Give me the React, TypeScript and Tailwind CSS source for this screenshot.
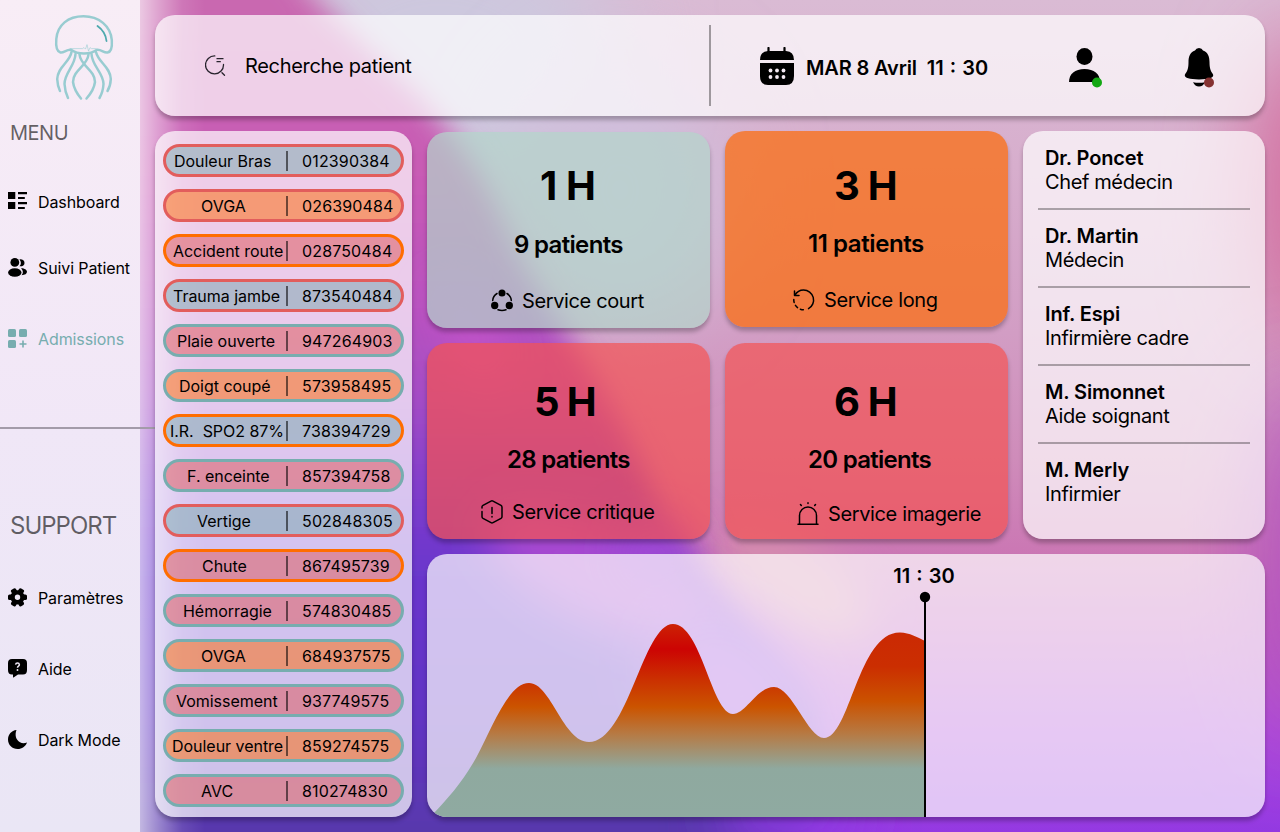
import type { ReactNode } from "react";

const SHADOW = "shadow-[0_4px_4px_rgba(0,0,0,0.25)]";

function Wallpaper() {
  return (
    <svg className="absolute inset-0 -z-10 h-full w-full" viewBox="0 0 1280 832" preserveAspectRatio="none" aria-hidden="true">
      <defs>
        <linearGradient id="base" x1="0" y1="0" x2="0" y2="1">
          <stop offset="0" stopColor="#dabbd4" />
          <stop offset="0.2" stopColor="#d7aecd" />
          <stop offset="0.4" stopColor="#d29dc4" />
          <stop offset="0.55" stopColor="#cf8cba" />
          <stop offset="0.66" stopColor="#cb78b4" />
          <stop offset="0.76" stopColor="#c060c0" />
          <stop offset="0.88" stopColor="#ac48da" />
          <stop offset="1" stopColor="#9439e2" />
        </linearGradient>
        <linearGradient id="wave" x1="0" y1="0" x2="0" y2="832" gradientUnits="userSpaceOnUse">
          <stop offset="0" stopColor="#c968b0" />
          <stop offset="0.22" stopColor="#c85ab5" />
          <stop offset="0.36" stopColor="#b852bd" />
          <stop offset="0.48" stopColor="#a44cc5" />
          <stop offset="0.6" stopColor="#7c3bcc" />
          <stop offset="0.7" stopColor="#6836cc" />
          <stop offset="0.86" stopColor="#6234c4" />
          <stop offset="1" stopColor="#5838ac" />
        </linearGradient>
        <linearGradient id="glow" x1="140" y1="0" x2="205" y2="0" gradientUnits="userSpaceOnUse">
          <stop offset="0" stopColor="#fff" stopOpacity="0.64" />
          <stop offset="0.3" stopColor="#fff" stopOpacity="0.38" />
          <stop offset="0.65" stopColor="#fff" stopOpacity="0.1" />
          <stop offset="1" stopColor="#fff" stopOpacity="0" />
        </linearGradient>
        <filter id="b14" x="-30%" y="-30%" width="160%" height="160%"><feGaussianBlur stdDeviation="14" /></filter>
        <filter id="b45" x="-80%" y="-80%" width="260%" height="260%"><feGaussianBlur stdDeviation="45" /></filter>
        <filter id="b22" x="-80%" y="-80%" width="260%" height="260%"><feGaussianBlur stdDeviation="22" /></filter>
        <filter id="b30" x="-80%" y="-80%" width="260%" height="260%"><feGaussianBlur stdDeviation="28" /></filter>
      </defs>
      <rect width="1280" height="832" fill="url(#base)" />
      <ellipse cx="440" cy="60" rx="180" ry="150" fill="#cdc8de" filter="url(#b45)" />
      <ellipse cx="620" cy="190" rx="110" ry="130" fill="#d0bfdc" filter="url(#b45)" />
      <ellipse cx="1310" cy="190" rx="60" ry="160" fill="#d36a9c" filter="url(#b45)" />
      <ellipse cx="1310" cy="560" rx="50" ry="180" fill="#b050c0" filter="url(#b45)" />
      <ellipse cx="790" cy="580" rx="90" ry="40" transform="rotate(30 790 580)" fill="#d58cae" filter="url(#b22)" />
      <path
        d="M-100 -100H250C280 -20 360 40 418 95C455 135 480 170 502 220C525 280 560 320 590 370C620 420 650 480 668 530C700 590 750 630 790 680C830 720 820 780 770 932H-100Z"
        fill="url(#wave)"
        filter="url(#b14)"
      />
      <ellipse cx="605" cy="575" rx="130" ry="50" transform="rotate(24 605 575)" fill="#a748d0" filter="url(#b22)" />
      <ellipse cx="655" cy="555" rx="36" ry="36" fill="#a04ad4" filter="url(#b22)" />
      <ellipse cx="735" cy="690" rx="90" ry="60" transform="rotate(42 735 690)" fill="#a048dc" filter="url(#b30)" />
      <ellipse cx="790" cy="815" rx="70" ry="40" fill="#8c39e0" filter="url(#b30)" />
      <ellipse cx="470" cy="330" rx="25" ry="60" transform="rotate(-30 470 330)" fill="#c152c8" filter="url(#b22)" />
      <rect x="140" width="65" height="832" fill="url(#glow)" />
    </svg>
  );
}

function Jellyfish() {
  return (
    <svg className="ml-[52px] block" width="64" height="90" viewBox="52 12 64 90" fill="none" stroke="#98ccd1" strokeWidth="2.500" strokeLinecap="round" strokeLinejoin="round">
      <path d="M71 49.800C66 49.500 64 53 60.500 52.500C56.500 51.500 55.800 45 56.300 39C57.500 25 68 16.300 83.500 16.300C99 16.300 110.500 26 111.800 40C112.200 46 111.300 52 107.500 52.500C103.500 53 102 49.500 97 49.800C90 54.800 78 54.800 71 49.800Z" />
      <path d="M70 48.600H82.500l1.500-1 1.500 1.500 1.500-4.500 1.500 6.500 1.500-3.500 1.500 1H96" strokeWidth="0.600" />
      <path d="M97.500 26C102.500 29.500 105.800 34 106.500 41" stroke="#4fa9ae" strokeWidth="1.800" />
      <path d="M71.500 52C70 62 57.500 67 57.200 79Q57.500 86 60 91" />
      <path d="M75.500 54C75 66 64.500 73 64.500 84Q65 92 68 98" />
      <path d="M79.500 54.500C80.500 66 95 70 95 82Q94 90 86.500 98.500" />
      <path d="M88.500 54.500C87.500 66 73 70 73 82Q74 90 81 98.500" />
      <path d="M91.500 54C92 66 103.500 73 103.500 84Q103 92 99.500 98" />
      <path d="M96 52C98 62 110.500 67 110.800 79Q110.500 86 107.500 91" />
    </svg>
  );
}

const navIcons: Record<string, ReactNode> = {
  dashboard: <path d="M0 0H7.300V7H0ZM0 10H7.300V17H0ZM10 0H19V2.200H10ZM10 5H16.800V7H10ZM10 10H19V12.200H10ZM10 15H16.800V17H10Z" />,
  users: (
    <>
      <circle cx="6.800" cy="4.400" r="4.400" />
      <ellipse cx="6.800" cy="14.500" rx="6.700" ry="4.300" />
      <path d="M11.500 1.400C14.500 1.100 16.500 2.600 16.500 4.900S14.500 8.600 11.500 8.300Q14.300 4.900 11.500 1.400ZM13 10.200C16.500 10.100 19 11.900 19 13.800S17 17.100 13.600 17.200Q16.500 14 13 10.200Z" />
    </>
  ),
  grid: (
    <>
      <rect width="8" height="8" rx="1.500" />
      <rect x="11" width="8" height="8" rx="1.500" />
      <rect y="11" width="8" height="8" rx="1.500" />
      <path d="M14.200 11.500h1.600v2.700h2.700v1.600h-2.700v2.700h-1.600v-2.700h-2.700v-1.600h2.700Z" />
    </>
  ),
  gear: (
    <>
      <circle cx="9.500" cy="9.300" r="4.900" fill="none" stroke="currentColor" strokeWidth="4.400" />
      {[0, 60, 120].map((turn) => (
        <g key={turn} transform={`rotate(${turn} 9.500 9.300)`}>
          <rect y="6.500" width="5" height="5.600" rx="1.600" />
          <rect x="14" y="6.500" width="5" height="5.600" rx="1.600" />
        </g>
      ))}
    </>
  ),
  help: (
    <>
      <path d="M4 0H15Q19 0 19 4V11Q19 15.500 15 15.500H10L5.500 18.500Q5 18.600 5 18V15.500H4Q0 15.500 0 11V4Q0 0 4 0Z" />
      <path d="M7.600 5.600Q7.800 4 9.500 4T11.400 5.800C11.400 7.200 9.500 7.200 9.500 8.800" fill="none" stroke="#efe8f6" strokeWidth="1.500" />
      <circle cx="9.500" cy="11" r="0.950" fill="#efe8f6" />
    </>
  ),
  moon: <path d="M8.500 0C3.500 0.500 0 4.500 0 9.500C0 15 4.300 19 9.600 19C14 19 17.500 16.500 19 12.500Q15 14 12 12.200C8 10 6.500 5 8.500 0Z" />,
};

function NavItem({ icon, label, active = false }: { icon: string; label: string; active?: boolean }) {
  return (
    <a className={`flex h-6 items-center gap-[11px] pl-2 ${active ? "text-[#77adaf]" : "text-black"}`}>
      <svg width="19" height="19" viewBox="0 0 19 19" fill="currentColor" className="mb-px shrink-0">
        {navIcons[icon]}
      </svg>
      <span className="text-[16px] leading-6 tracking-[-0.1px] whitespace-nowrap">{label}</span>
    </a>
  );
}

function Sidebar() {
  return (
    <aside className="flex w-[155px] shrink-0 flex-col">
      <div className="flex h-[427px] w-[140px] flex-col bg-gradient-to-b from-[#f8edf6] to-[#f1e7f7] pt-3">
        <Jellyfish />
        <h2 className="mt-[19px] pl-2.5 text-[20px] leading-6 tracking-[-0.5px] text-black/60">MENU</h2>
        <nav className="mt-[45px] flex flex-col">
          <NavItem icon="dashboard" label="Dashboard" />
          <div className="mt-[42px]"><NavItem icon="users" label="Suivi Patient" /></div>
          <div className="mt-[47px]"><NavItem icon="grid" label="Admissions" active /></div>
        </nav>
      </div>
      <hr className="h-[2px] w-[155px] border-0 bg-[#a39ba9]" />
      <div className="flex w-[140px] grow flex-col bg-gradient-to-b from-[#f0e7f7] to-[#eae6f5] pt-[82px]">
        <h2 className="pl-2.5 text-[24px] leading-[29px] tracking-[-1px] text-black/60">SUPPORT</h2>
        <nav className="mt-[46px] flex flex-col gap-[47px]">
          <NavItem icon="gear" label="Paramètres" />
          <NavItem icon="help" label="Aide" />
          <NavItem icon="moon" label="Dark Mode" />
        </nav>
      </div>
    </aside>
  );
}

function Header() {
  return (
    <header className={`flex h-[101px] shrink-0 items-center rounded-[20px] bg-white/70 ${SHADOW}`}>
      <div className="flex w-[554px] items-center gap-[19px] pl-[50px]">
        <svg width="21" height="21" viewBox="0 0 21 21" fill="none" stroke="#27232c" strokeWidth="1.300" strokeLinecap="round">
          <path d="M9.800 0.900A9 9 0 1 0 18.500 9.500M12 3.700H18M12 6.700H15.300M17 17.700L19.500 20.200" />
        </svg>
        <span className="text-[20px] leading-6 tracking-[-0.32px]">Recherche patient</span>
      </div>
      <div className="h-[81px] w-[2px] bg-black/35" />
      <div className="ml-[49px] flex items-center gap-3">
        <svg width="34" height="38" viewBox="0 0 34 38">
          <path d="M8.500 5V1M24.500 5V1" stroke="#000" strokeWidth="2.200" strokeLinecap="round" />
          <path d="M8 4H26Q34 4.500 34 13H0Q0 4.500 8 4Z" />
          <path d="M0 16H34V29Q34 38 26 38H8Q0 38 0 29Z" />
          <g fill="#f5eaf3">
            <circle cx="10.500" cy="23.500" r="1.900" /><circle cx="17" cy="23.500" r="1.900" /><circle cx="23.500" cy="23.500" r="1.900" />
            <circle cx="10.500" cy="30" r="1.900" /><circle cx="17" cy="30" r="1.900" /><circle cx="23.500" cy="30" r="1.900" />
          </g>
        </svg>
        <div className="mt-1 flex gap-[10px] text-[20px] leading-6 font-semibold tracking-[-0.15px]">
          <span>MAR 8 Avril</span>
          <span className="tracking-normal [word-spacing:1px]">11 : 30</span>
        </div>
      </div>
      <svg className="mt-1 ml-auto" width="34" height="40" viewBox="0 0 34 40">
        <ellipse cx="15.500" cy="8.500" rx="8" ry="8.500" />
        <path d="M0 34C0 26 6 21 15.500 21S31 26 31 34Z" />
        <circle cx="28" cy="34.500" r="5" fill="#13a813" />
      </svg>
      <svg className="mt-1 mr-[50px] ml-[81px]" width="31" height="40" viewBox="0 0 31 40">
        <path d="M15 0Q18 0 19 2.500C24 4 25.500 9 25.500 14C25.500 20 26.500 23 28.500 25.500C31 29 27 31.500 15 31.500S-1 29 1.500 25.500C3.500 23 4.500 20 4.500 14C4.500 9 6 4 11 2.500Q12 0 15 0ZM9 34.300Q15 35.300 21 34.300Q19 38.500 15 38.500T9 34.300Z" />
        <circle cx="25" cy="34.500" r="5" fill="#853232" />
      </svg>
    </header>
  );
}

const tone = {
  teal: "bg-[#82abb2]/55",
  orange: "bg-[#fb7116]/55",
  red: "bg-[#df5f62]/55",
};
const ring = {
  teal: "border-[#77adaf]",
  orange: "border-[#ff6d00]",
  red: "border-[#e25d5c]",
};
type Tone = keyof typeof tone;

const patients: [string, string, Tone, Tone, string][] = [
  ["Douleur Bras", "012390384", "teal", "red", "pl-[8px]"],
  ["OVGA", "026390484", "orange", "red", "pl-[35px]"],
  ["Accident route", "028750484", "red", "orange", "pl-[7px]"],
  ["Trauma jambe", "873540484", "teal", "red", "pl-[7px]"],
  ["Plaie ouverte", "947264903", "red", "teal", "pl-[11px]"],
  ["Doigt coupé", "573958495", "orange", "teal", "pl-[13px]"],
  ["I.R.  SPO2 87%", "738394729", "teal", "orange", "pl-[4px]"],
  ["F. enceinte", "857394758", "red", "teal", "pl-[21px]"],
  ["Vertige", "502848305", "teal", "red", "pl-[31px]"],
  ["Chute", "867495739", "red", "orange", "pl-[36px]"],
  ["Hémorragie", "574830485", "red", "teal", "pl-[17px]"],
  ["OVGA", "684937575", "orange", "teal", "pl-[35px]"],
  ["Vomissement", "937749575", "red", "teal", "pl-[10px]"],
  ["Douleur ventre", "859274575", "orange", "teal", "pl-[6px]"],
  ["AVC", "810274830", "red", "teal", "pl-[35px]"],
];

function PatientList() {
  return (
    <section className={`flex w-[257px] shrink-0 flex-col items-center gap-3 rounded-[20px] bg-white/70 pt-[13px] ${SHADOW}`}>
      {patients.map(([name, id, fill, line, pad]) => (
        <div key={id} className={`flex h-[33px] w-[241px] items-center rounded-full border-3 ${tone[fill]} ${ring[line]}`}>
          <span className={`w-[120px] shrink-0 text-[16px] leading-5 tracking-[-0.03px] whitespace-pre ${pad}`}>{name}</span>
          <span className="h-5 w-[2px] shrink-0 bg-black/55" />
          <span className="pl-[14px] text-[16px] leading-5 tracking-[0.15px]">{id}</span>
        </div>
      ))}
    </section>
  );
}

interface ServiceProps {
  hours: string;
  count: string;
  service: string;
  className: string;
  hoursPad: string;
  countPad: string;
  servicePad: string;
  icon: ReactNode;
}

function ServiceCard({ hours, count, service, className, hoursPad, countPad, servicePad, icon }: ServiceProps) {
  return (
    <article className={`flex h-[196px] w-[283px] flex-col rounded-[20px] ${SHADOW} ${className}`}>
      <div className={`text-[40px] leading-[48px] font-bold whitespace-nowrap ${hoursPad}`}>{hours}</div>
      <div className={`text-[24px] leading-[29px] font-semibold whitespace-nowrap ${countPad}`}>{count}</div>
      <div className={`flex items-center gap-[7px] ${servicePad}`}>
        <svg width="24" height="26" viewBox="0 0 24 26" fill="none" stroke="#000" strokeWidth="1.500" strokeLinecap="round" strokeLinejoin="round">{icon}</svg>
        <span className="text-[20px] leading-6 tracking-[-0.37px] whitespace-nowrap">{service}</span>
      </div>
    </article>
  );
}

const services: ServiceProps[] = [
  {
    hours: "1 H", count: "9 patients", service: "Service court", className: "mt-px pt-[30px] bg-[#b3d6ca]/70",
    hoursPad: "pl-[113px] tracking-[-0.3px]", countPad: "mt-5 pl-[87px] tracking-[-0.67px]", servicePad: "mt-[29px] pl-[64px]",
    icon: (
      <>
        <circle cx="11" cy="5" r="2.800" fill="#000" />
        <circle cx="3.700" cy="17.500" r="2.900" fill="#000" />
        <circle cx="18.300" cy="17.500" r="2.900" fill="#000" />
        <path d="M6 5.500Q2 8 1.700 12.500M16 5.500Q20 8 20.300 12.500M7 21.800Q11 23.200 15 21.800" />
      </>
    ),
  },
  {
    hours: "3 H", count: "11 patients", service: "Service long", className: "pt-[31px] bg-[#fb6e12]/75",
    hoursPad: "pl-[109px] tracking-[-0.8px]", countPad: "mt-[19px] pl-[83px] tracking-[-0.42px]", servicePad: "mt-[29px] pl-[68px]",
    icon: (
      <>
        <path d="M1.500 4V8.500H6M2 8A10 10 0 0 1 10.500 3A10 10 0 0 1 15.500 21.700" />
        <path d="M0.800 12.500A10 10 0 0 0 12.500 22.700" strokeDasharray="3 3.200" />
      </>
    ),
  },
  {
    hours: "5 H", count: "28 patients", service: "Service critique", className: "pt-[35px] bg-[#f45353]/70",
    hoursPad: "pl-[107px] tracking-[-1.1px]", countPad: "mt-[19px] pl-[80px] tracking-[-0.7px]", servicePad: "mt-[25px] pl-[54px]",
    icon: <path d="M1 9V7.700Q1 7 2 6.400L10 2.100Q11 1.600 12 2.100L20 6.400Q21 7 21 8.200V17.800Q21 18.800 20 19.400L12 23.700Q11 24.300 10 23.700L2 19.400Q1 18.800 1 17.800V12.500M11 8.500V14.500M11 17.500V18" />,
  },
  {
    hours: "6 H", count: "20 patients", service: "Service imagerie", className: "pt-[35px] bg-[#f45353]/70",
    hoursPad: "pl-[109px] tracking-[-0.8px]", countPad: "mt-[19px] pl-[83px] tracking-[-0.72px]", servicePad: "mt-[27px] pl-[72px]",
    icon: <path d="M2.500 22.500V14.500A8.500 8.500 0 0 1 19.500 14.500V22.500M1 23.200H21M11 1.700V2.500M3.500 3.500L4.300 4.500M18.500 3.500L17.700 4.500" />,
  },
];

const staff = [
  ["Dr. Poncet", "Chef médecin"],
  ["Dr. Martin", "Médecin"],
  ["Inf. Espi", "Infirmière cadre"],
  ["M. Simonnet", "Aide soignant"],
  ["M. Merly", "Infirmier"],
];

function Staff() {
  return (
    <section className={`w-[242px] shrink-0 rounded-[20px] bg-white/70 px-[15px] pt-px ${SHADOW}`}>
      {staff.map(([name, role], i) => (
        <div key={name} className={`h-[78px] pt-[14px] pl-[7px] text-[20px] leading-6 ${i < 4 ? "border-b-2 border-black/30" : ""}`}>
          <div className="font-semibold tracking-[-0.14px]">{name}</div>
          <div className="tracking-[-0.38px]">{role}</div>
        </div>
      ))}
    </section>
  );
}

function Chart() {
  return (
    <section className={`h-[263px] overflow-hidden rounded-[20px] bg-white/70 ${SHADOW}`}>
      <svg width="838" height="263" viewBox="427 554 838 263" className="block">
        <defs>
          <linearGradient id="load" x1="0" y1="624" x2="0" y2="817" gradientUnits="userSpaceOnUse">
            <stop offset="0" stopColor="#cc2204" />
            <stop offset="0.130" stopColor="#cc0403" />
            <stop offset="0.280" stopColor="#cb2e01" />
            <stop offset="0.430" stopColor="#cb5400" />
            <stop offset="0.570" stopColor="#b67a44" />
            <stop offset="0.750" stopColor="#8fa99f" />
            <stop offset="1" stopColor="#8faaa1" />
          </linearGradient>
          <linearGradient id="loadNow" x1="0" y1="624" x2="0" y2="817" gradientUnits="userSpaceOnUse">
            <stop offset="0" stopColor="#cb2804" />
            <stop offset="0.220" stopColor="#cb2e01" />
            <stop offset="0.400" stopColor="#cb5200" />
            <stop offset="0.570" stopColor="#b67a44" />
            <stop offset="0.750" stopColor="#8fa99f" />
            <stop offset="1" stopColor="#8faaa1" />
          </linearGradient>
        </defs>
        <path
          fill="url(#load)"
          d="M434 813C448 798 462 783 476 758C492 729 508 683 529 683C551 683 563 742 589 742C628 742 643 624 673 624C701 624 712 714 733 714C746 714 757 687 774 687C792 687 808 738 824 738V817H434Z"
        />
        <path fill="url(#loadNow)" d="M824 738C850 738 858 632 900 632.500C910 633 917 637 925 641V817H824Z" />
        <path d="M925 598V817" stroke="#000" strokeWidth="2" />
        <circle cx="925" cy="597" r="5.200" />
        <text x="924" y="583" textAnchor="middle" className="text-[20px] font-semibold [word-spacing:1px]">11 : 30</text>
      </svg>
    </section>
  );
}

export default function App() {
  return (
    <div className="relative isolate flex h-[832px] w-[1280px] overflow-hidden font-['Inter',sans-serif] text-black">
      <Wallpaper />
      <Sidebar />
      <main className="flex w-[1110px] flex-col gap-[15px] py-[15px]">
        <Header />
        <div className="flex grow gap-[15px]">
          <PatientList />
          <div className="flex grow flex-col gap-[15px]">
            <div className="flex h-[408px] gap-[15px]">
              <div className="grid grid-cols-[283px_283px] grid-rows-[197px_196px] gap-[15px]">
                {services.map((s) => <ServiceCard key={s.service} {...s} />)}
              </div>
              <Staff />
            </div>
            <Chart />
          </div>
        </div>
      </main>
    </div>
  );
}
